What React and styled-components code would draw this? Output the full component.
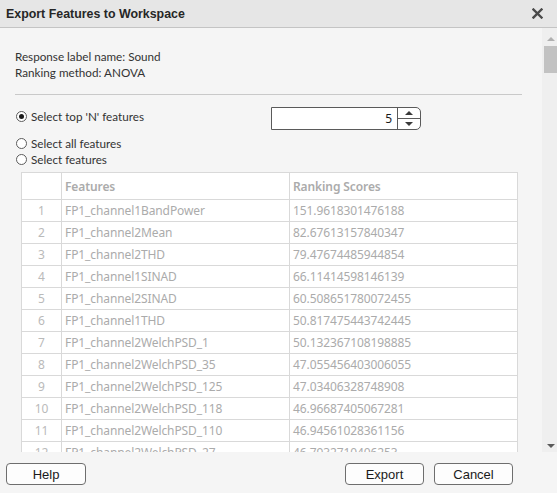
import React from "react";
import styled, { createGlobalStyle } from "styled-components";

const Global = createGlobalStyle`
  html, body { margin: 0; padding: 0; width: 557px; height: 493px; overflow: hidden; }
  body { background: #f5f5f5; font-family: "Noto Sans", "Open Sans", sans-serif; }
  * { box-sizing: border-box; }
`;

const Dialog = styled.div`
  width: 557px;
  height: 493px;
  display: flex;
  flex-direction: column;
  background: #f5f5f5;
`;

const TitleBar = styled.div`
  height: 28px;
  flex: none;
  display: flex;
  align-items: center;
  justify-content: space-between;
  padding: 0 14px 0 6px;
  background: #e6e6e6;
  border-bottom: 1px solid #c4c4c4;
`;

const Title = styled.div`
  font-family: "Liberation Sans", Arial, sans-serif;
  font-weight: bold;
  font-size: 12.4px;
  color: #262626;
`;

const Body = styled.div`
  flex: 1;
  min-height: 0;
  display: flex;
`;

const Scroller = styled.div`
  flex: 1;
  min-width: 0;
  overflow: hidden;
  padding: 20px 20px 0 15px;
`;

const ScrollTrack = styled.div`
  width: 15px;
  flex: none;
  background: #efefef;
  display: flex;
  flex-direction: column;
  align-items: center;
  padding: 5px 0 4px 2px;
`;

const Thumb = styled.div`
  width: 13px;
  height: 27px;
  margin-top: 5px;
  background: #c2c2c2;
`;

const Arrow = styled.div`
  width: 0;
  height: 0;
  border-left: 4px solid transparent;
  border-right: 4px solid transparent;
  ${(p) => (p.$down ? `border-top: 4px solid ${p.$color};` : `border-bottom: 4px solid ${p.$color};`)}
  margin-top: ${(p) => (p.$down ? "auto" : "4px")};
`;

const Info = styled.div`
  font-family: Lato, "Noto Sans", sans-serif;
  font-size: 11.7px;
  line-height: 16px;
  color: #333;
`;

const Divider = styled.div`
  height: 1px;
  background: #c9c9c9;
  margin: 14px 0 12px;
`;

const Row = styled.div`
  display: flex;
  align-items: flex-start;
`;

const RadioLabel = styled.label`
  display: flex;
  align-items: center;
  gap: 4px;
  font-family: Lato, "Noto Sans", sans-serif;
  font-size: 11.7px;
  line-height: ${(p) => p.$lh || 16}px;
  color: #333;
  width: ${(p) => (p.$w ? p.$w + "px" : "auto")};
  padding-left: 1px;
`;

const RadioCircle = styled.span`
  width: 11px;
  height: 11px;
  border-radius: 50%;
  border: 1px solid #5c5c5c;
  background: #fff;
  display: flex;
  align-items: center;
  justify-content: center;
  &::after {
    content: "";
    width: 5px;
    height: 5px;
    border-radius: 50%;
    background: ${(p) => (p.$checked ? "#1a1a1a" : "transparent")};
  }
`;

const Spinner = styled.div`
  display: flex;
  width: 150px;
  height: 23px;
  border: 1px solid #5a5a5a;
  border-radius: 0 5px 5px 0;
  background: #fff;
`;

const SpinValue = styled.div`
  flex: 1;
  text-align: right;
  padding-right: 5px;
  font-size: 12px;
  line-height: 21px;
  color: #1a1a1a;
`;

const SpinButtons = styled.div`
  width: 23px;
  border-left: 1px solid #5a5a5a;
  display: flex;
  flex-direction: column;
`;

const SpinBtn = styled.div`
  flex: 1;
  display: flex;
  align-items: center;
  justify-content: center;
  & + & { border-top: 1px solid #5a5a5a; }
`;

const Tri = styled.span`
  width: 0;
  height: 0;
  border-left: 4px solid transparent;
  border-right: 4px solid transparent;
  ${(p) => (p.$down ? "border-top: 4px solid #3a3a3a;" : "border-bottom: 4px solid #3a3a3a;")}
`;

const Options = styled.div`
  display: flex;
  flex-direction: column;
  margin-top: 5px;
`;

const Table = styled.table`
  margin: 5px 0 0 6px;
  width: 496px;
  border-collapse: collapse;
  background: #fff;
  table-layout: fixed;
  font-size: 12px;
  letter-spacing: -0.1px;
`;

const Th = styled.th`
  height: 27px;
  border: 1px solid #d9d9d9;
  text-align: left;
  padding: 0 3px;
  font-weight: 600;
  color: #ababab;
  width: ${(p) => p.$w}px;
`;

const Td = styled.td`
  height: 22px;
  border: 1px solid #d9d9d9;
  padding: 0 3px;
  color: ${(p) => (p.$num ? "#bababa" : "#ababab")};
  text-align: ${(p) => (p.$num ? "center" : "left")};
  white-space: nowrap;
  overflow: hidden;
`;

const Footer = styled.div`
  height: 41px;
  flex: none;
  display: flex;
  align-items: flex-start;
  gap: 10px;
  padding: 11px 44px 0 6px;
`;

const Button = styled.button`
  width: ${(p) => p.$w}px;
  height: 22px;
  border: 1px solid #6e6e6e;
  border-radius: 4px;
  background: #fdfdfd;
  font-family: "Liberation Sans", Arial, sans-serif;
  font-size: 13px;
  color: #1a1a1a;
  padding: 0;
  ${(p) => (p.$push ? "margin-left: auto;" : "")}
`;

const rows = [
  ["FP1_channel1BandPower", "151.9618301476188"],
  ["FP1_channel2Mean", "82.67613157840347"],
  ["FP1_channel2THD", "79.47674485944854"],
  ["FP1_channel1SINAD", "66.11414598146139"],
  ["FP1_channel2SINAD", "60.508651780072455"],
  ["FP1_channel1THD", "50.817475443742445"],
  ["FP1_channel2WelchPSD_1", "50.132367108198885"],
  ["FP1_channel2WelchPSD_35", "47.055456403006055"],
  ["FP1_channel2WelchPSD_125", "47.03406328748908"],
  ["FP1_channel2WelchPSD_118", "46.96687405067281"],
  ["FP1_channel2WelchPSD_110", "46.94561028361156"],
  ["FP1_channel2WelchPSD_27", "46.7932710406253"],
];

export default function App() {
  return (
    <>
      <Global />
      <Dialog>
        <TitleBar>
          <Title>Export Features to Workspace</Title>
          <svg width="11" height="11" viewBox="0 0 11 11">
            <path d="M1.5 1.5 L9.5 9.5 M9.5 1.5 L1.5 9.5" stroke="#4a4a4a" strokeWidth="2.4" strokeLinecap="square" />
          </svg>
        </TitleBar>
        <Body>
          <Scroller>
            <Info>Response label name: Sound</Info>
            <Info>Ranking method: ANOVA</Info>
            <Divider />
            <Row>
              <RadioLabel $w={256} $lh={18}>
                <RadioCircle $checked />
                Select top 'N' features
              </RadioLabel>
              <Spinner>
                <SpinValue>5</SpinValue>
                <SpinButtons>
                  <SpinBtn><Tri /></SpinBtn>
                  <SpinBtn><Tri $down /></SpinBtn>
                </SpinButtons>
              </Spinner>
            </Row>
            <Options>
              <RadioLabel>
                <RadioCircle />
                Select all features
              </RadioLabel>
              <RadioLabel>
                <RadioCircle />
                Select features
              </RadioLabel>
            </Options>
            <Table>
              <thead>
                <tr>
                  <Th $w={40}></Th>
                  <Th $w={228}>Features</Th>
                  <Th $w={228}>Ranking Scores</Th>
                </tr>
              </thead>
              <tbody>
                {rows.map((r, i) => (
                  <tr key={i}>
                    <Td $num>{i + 1}</Td>
                    <Td>{r[0]}</Td>
                    <Td>{r[1]}</Td>
                  </tr>
                ))}
              </tbody>
            </Table>
          </Scroller>
          <ScrollTrack>
            <Arrow $color="#b0b0b0" />
            <Thumb />
            <Arrow $down $color="#5a5a5a" />
          </ScrollTrack>
        </Body>
        <Footer>
          <Button $w={80}>Help</Button>
          <Button $w={79} $push>Export</Button>
          <Button $w={79}>Cancel</Button>
        </Footer>
      </Dialog>
    </>
  );
}
